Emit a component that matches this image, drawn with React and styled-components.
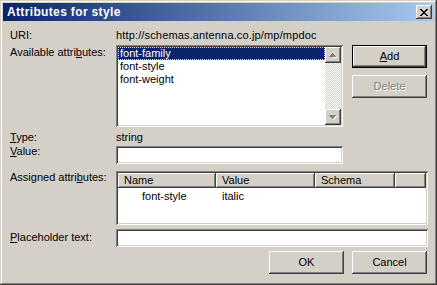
import React from 'react';
import styled, { createGlobalStyle, css } from 'styled-components';

const Global = createGlobalStyle`
  html, body { margin: 0; padding: 0; background: #d4d0c8; }
  * { box-sizing: border-box; }
`;

const FONT = `"Liberation Sans", Arial, sans-serif`;

const raised = css`
  box-shadow: inset -1px -1px #404040, inset 1px 1px #ffffff,
    inset -2px -2px #808080, inset 2px 2px #d4d0c8;
`;

const sunken = css`
  box-shadow: inset 1px 1px #808080, inset -1px -1px #ffffff,
    inset 2px 2px #404040, inset -2px -2px #d4d0c8;
`;

const Window = styled.div`
  width: 437px;
  height: 285px;
  background: #d4d0c8;
  padding: 3px;
  box-shadow: inset -1px -1px #404040, inset 1px 1px #d4d0c8,
    inset -2px -2px #808080, inset 2px 2px #ffffff;
  font-family: ${FONT};
  font-size: 11px;
  color: #000;
  display: flex;
  flex-direction: column;
`;

const TitleBar = styled.div`
  height: 18px;
  flex: none;
  background: linear-gradient(to right, #0a246a, #a6caf0);
  display: flex;
  align-items: center;
  justify-content: space-between;
  padding: 0 2px 0 4px;
`;

const Title = styled.span`
  color: #fff;
  font-weight: bold;
  font-size: 12px;
  line-height: 18px;
  letter-spacing: 0.35px;
`;

const CloseButton = styled.div`
  width: 16px;
  height: 14px;
  background: #d4d0c8;
  ${raised};
  display: flex;
  align-items: center;
  justify-content: center;
  padding-right: 1px;
`;

const Body = styled.div`
  padding: 0 6px 0 7px;
  display: flex;
  flex-direction: column;
`;

const Row = styled.div`
  display: flex;
  align-items: flex-start;
  margin-top: ${(p) => p.$top}px;
`;

const Label = styled.div`
  width: 106px;
  flex: none;
  line-height: 13px;
  white-space: nowrap;
  padding-top: ${(p) => p.$pad || 0}px;
`;

const Text = styled.div`
  line-height: 13px;
  white-space: nowrap;
  letter-spacing: ${(p) => p.$ls || 0}px;
`;

const Key = styled.span`
  text-decoration: underline;
  text-underline-offset: 1px;
`;

const ListBox = styled.div`
  width: 227px;
  height: 82px;
  flex: none;
  background: #fff;
  ${sunken};
  padding: 2px;
  display: flex;
`;

const Items = styled.div`
  flex: 1;
  display: flex;
  flex-direction: column;
`;

const Item = styled.div`
  height: 13px;
  line-height: 11px;
  padding-left: 1px;
  white-space: nowrap;
  border: 1px dotted ${(p) => (p.$selected ? '#f5db95' : 'transparent')};
  background: ${(p) => (p.$selected ? '#0a246a' : 'transparent')};
  color: ${(p) => (p.$selected ? '#fff' : '#000')};
`;

const ScrollBar = styled.div`
  width: 16px;
  flex: none;
  display: flex;
  flex-direction: column;
  background: repeating-conic-gradient(#d4d0c8 0 25%, #ffffff 0 50%) 0 0 / 2px 2px;
`;

const ScrollTrack = styled.div`
  flex: 1;
`;

const ScrollButton = styled.div`
  height: 16px;
  background: #d4d0c8;
  ${raised};
  display: flex;
  align-items: center;
  justify-content: center;
`;

const ButtonColumn = styled.div`
  display: flex;
  flex-direction: column;
  gap: 7px;
  margin-left: 9px;
`;

const Button = styled.div`
  width: 75px;
  height: 23px;
  background: #d4d0c8;
  display: flex;
  align-items: center;
  justify-content: center;
  line-height: 13px;
  ${raised};
  ${(p) =>
    p.$default &&
    css`
      box-shadow: inset 0 0 0 1px #000, inset -2px -2px #404040,
        inset 2px 2px #ffffff, inset -3px -3px #808080,
        inset 3px 3px #d4d0c8;
    `}
  ${(p) =>
    p.$disabled &&
    css`
      color: #808080;
      text-shadow: 1px 1px 0 #ffffff;
    `}
`;

const Field = styled.div`
  width: ${(p) => p.$w}px;
  height: 18px;
  flex: none;
  background: #fff;
  ${sunken};
  margin-top: ${(p) => p.$mt || 0}px;
`;

const Table = styled.div`
  width: 312px;
  height: 54px;
  flex: none;
  background: #fff;
  ${sunken};
  padding: 2px;
  display: flex;
  flex-direction: column;
`;

const HeaderRow = styled.div`
  display: flex;
  height: 15px;
  flex: none;
`;

const HeaderCell = styled.div`
  width: ${(p) => p.$w}px;
  flex: ${(p) => (p.$w ? 'none' : '1')};
  background: #d4d0c8;
  box-shadow: inset -1px -1px #404040, inset 1px 1px #ffffff,
    inset -2px -2px #808080;
  padding-left: 6px;
  line-height: 14px;
  white-space: nowrap;
`;

const DataRow = styled.div`
  display: flex;
  height: 13px;
  margin-top: 2px;
`;

const Cell = styled.div`
  width: ${(p) => p.$w}px;
  flex: none;
  padding-left: ${(p) => p.$pad}px;
  line-height: 13px;
  white-space: nowrap;
`;

const Footer = styled.div`
  display: flex;
  justify-content: flex-end;
  gap: 8px;
  margin-top: 4px;
  padding-right: 1px;
`;

const CloseIcon = () => (
  <svg width="8" height="7" viewBox="0 0 8 7" shapeRendering="crispEdges">
    <path
      d="M0 0h2v1h-2zM6 0h2v1h-2zM1 1h2v1h-2zM5 1h2v1h-2zM2 2h4v1h-4zM3 3h2v1h-2zM2 4h4v1h-4zM1 5h2v1h-2zM5 5h2v1h-2zM0 6h2v1h-2zM6 6h2v1h-2z"
      fill="#000"
    />
  </svg>
);

const Arrow = ({ up }) => (
  <svg width="8" height="5" viewBox="0 0 8 5" shapeRendering="crispEdges">
    {up ? (
      <>
        <path d="M4 1h1v1h1v1h1v1h1v1h-4z" fill="#fff" />
        <path d="M3 0h1v1h1v1h1v1h1v1h-7v-1h1v-1h1v-1h1z" fill="#808080" />
      </>
    ) : (
      <>
        <path d="M1 1h7v1h-1v1h-1v1h-1v1h-1v-1h1v-1h1v-1h-5z" fill="#fff" />
        <path d="M0 0h7v1h-1v1h-1v1h-1v1h-1v-1h-1v-1h-1v-1h-1z" fill="#808080" />
      </>
    )}
  </svg>
);

const available = ['font-family', 'font-style', 'font-weight'];

export default function App() {
  return (
    <>
      <Global />
      <Window>
        <TitleBar>
          <Title>Attributes for style</Title>
          <CloseButton>
            <CloseIcon />
          </CloseButton>
        </TitleBar>
        <Body>
          <Row $top={8}>
            <Label>URI:</Label>
            <Text $ls={0.15}>http://schemas.antenna.co.jp/mp/mpdoc</Text>
          </Row>
          <Row $top={3}>
            <Label $pad={1}>
              Available attri<Key>b</Key>utes:
            </Label>
            <ListBox>
              <Items>
                {available.map((a, i) => (
                  <Item key={a} $selected={i === 0}>
                    {a}
                  </Item>
                ))}
              </Items>
              <ScrollBar>
                <ScrollButton>
                  <Arrow up />
                </ScrollButton>
                <ScrollTrack />
                <ScrollButton>
                  <Arrow />
                </ScrollButton>
              </ScrollBar>
            </ListBox>
            <ButtonColumn>
              <Button $default>
                <span>
                  <Key>A</Key>dd
                </span>
              </Button>
              <Button $disabled>Delete</Button>
            </ButtonColumn>
          </Row>
          <Row $top={4}>
            <Label>
              <Key>T</Key>ype:
            </Label>
            <Text>string</Text>
          </Row>
          <Row $top={1}>
            <Label>
              <Key>V</Key>alue:
            </Label>
            <Field $w={227} $mt={1} />
          </Row>
          <Row $top={7}>
            <Label>
              Assigned attri<Key>b</Key>utes:
            </Label>
            <Table>
              <HeaderRow>
                <HeaderCell $w={98}>Name</HeaderCell>
                <HeaderCell $w={99}>Value</HeaderCell>
                <HeaderCell $w={80}>Schema</HeaderCell>
                <HeaderCell />
              </HeaderRow>
              <DataRow>
                <Cell $w={98} $pad={24}>
                  font-style
                </Cell>
                <Cell $w={99} $pad={6}>
                  italic
                </Cell>
              </DataRow>
            </Table>
          </Row>
          <Row $top={4}>
            <Label $pad={2}>
              <Key>P</Key>laceholder text:
            </Label>
            <Field $w={312} />
          </Row>
          <Footer>
            <Button>OK</Button>
            <Button>Cancel</Button>
          </Footer>
        </Body>
      </Window>
    </>
  );
}
